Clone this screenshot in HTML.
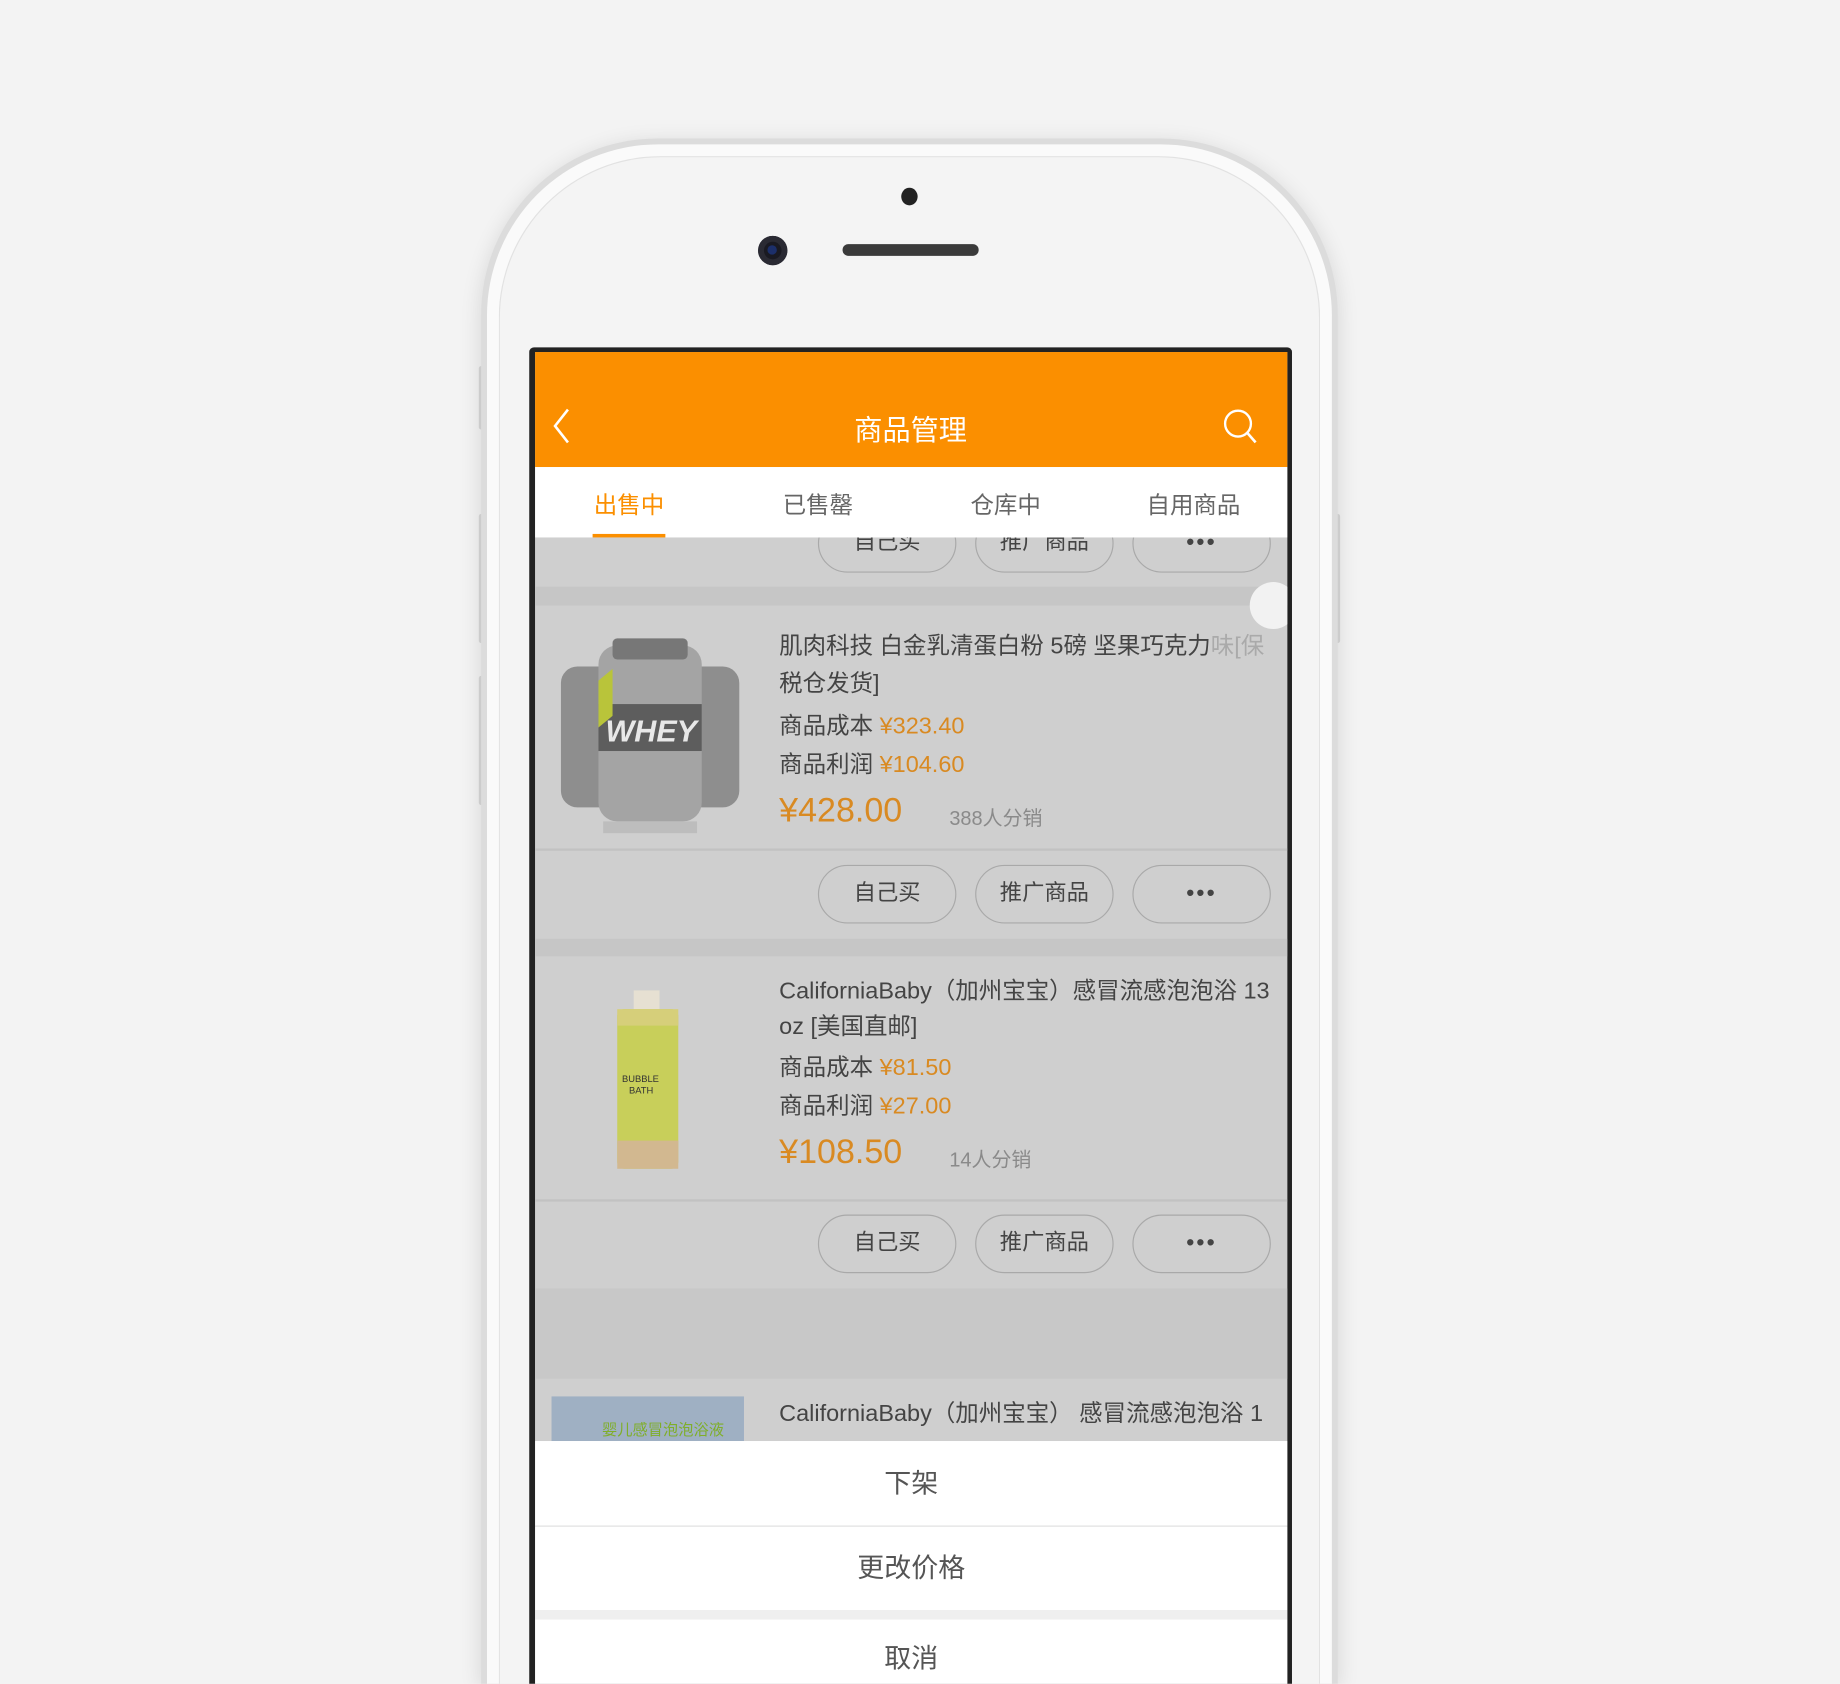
<!DOCTYPE html>
<html><head><meta charset="utf-8"><style>
*{margin:0;padding:0;box-sizing:border-box}
html,body{width:1840px;height:1684px;overflow:hidden;background:#f3f3f3}
#w{position:absolute;left:0;top:0;width:1568px;height:1435px;overflow:hidden;transform:scale(1.17347);transform-origin:0 0;font-family:"Liberation Sans","Noto Sans CJK SC",sans-serif}
.a{position:absolute}
.btn{position:absolute;width:118px;height:50px;border:1.5px solid #a9a9a9;border-radius:25px;text-align:center;line-height:47px;font-size:19px;color:#444}
.t{position:absolute;left:664px;font-size:20px;color:#444;white-space:nowrap}
.o{color:#d98a22}
.pr{position:absolute;left:664px;font-size:29px;color:#d98a22}
.sold{position:absolute;left:809px;font-size:17px;color:#8a8a8a}
.as{position:absolute;left:456px;width:641px;text-align:center;font-size:23px;color:#555;background:#fff}
</style></head><body><div id="w">
<div class="a" style="left:408px;top:312px;width:6px;height:54px;background:#d8d8d8;border-radius:2px"></div>
<div class="a" style="left:408px;top:438px;width:6px;height:110px;background:#d8d8d8;border-radius:2px"></div>
<div class="a" style="left:408px;top:576px;width:6px;height:110px;background:#d8d8d8;border-radius:2px"></div>
<div class="a" style="left:1136px;top:438px;width:6px;height:110px;background:#d8d8d8;border-radius:2px"></div>
<div class="a" style="left:410px;top:118px;width:730px;height:1317px;border-radius:150px 150px 0 0;background:#dcdcdc;box-shadow:0 4px 18px rgba(0,0,0,.12)"></div>
<div class="a" style="left:415px;top:123px;width:720px;height:1312px;border-radius:146px 146px 0 0;background:#fafafa"></div>
<div class="a" style="left:425px;top:133px;width:700px;height:1302px;border-radius:138px 138px 0 0;background:#f4f4f4;border:1px solid #e2e2e2;border-bottom:none"></div>
<div class="a" style="left:768px;top:160px;width:14px;height:15px;border-radius:50%;background:#222"></div>
<div class="a" style="left:646px;top:201px;width:25px;height:25px;border-radius:50%;background:#1a1a22;box-shadow:inset 0 0 0 5px #2a2a33"></div>
<div class="a" style="left:654px;top:209px;width:8px;height:8px;border-radius:50%;background:#1c2f6a"></div>
<div class="a" style="left:718px;top:208px;width:116px;height:10px;border-radius:5px;background:#3a3a3a"></div>
<div class="a" style="left:451px;top:296px;width:650px;height:1139px;background:#222;border-radius:4px 4px 0 0"></div>
<div class="a" style="left:456px;top:300px;width:641px;height:1135px;background:#cfcfcf"></div>
<div class="a" style="left:456px;top:300px;width:641px;height:98px;background:#fb8f00"></div>
<svg class="a" style="left:466px;top:345px" width="26" height="36"><path d="M18 4 L7 18 L18 32" stroke="#fff" stroke-width="2.2" fill="none"/></svg>
<div class="a" style="left:676px;top:347px;width:200px;text-align:center;color:#fff;font-size:24px">商品管理</div>
<svg class="a" style="left:1040px;top:346px" width="34" height="34"><circle cx="15" cy="15" r="11" stroke="#fff" stroke-width="2" fill="none"/><path d="M23 23 L30 31" stroke="#fff" stroke-width="2.2"/></svg>
<div class="a" style="left:456px;top:398px;width:641px;height:60px;background:#fff"></div>
<div class="a" style="left:476px;top:414px;width:120px;text-align:center;font-size:20px;color:#fb8f00">出售中</div>
<div class="a" style="left:505px;top:455px;width:62px;height:3px;background:#fb8f00"></div>
<div class="a" style="left:637px;top:414px;width:120px;text-align:center;font-size:20px;color:#666">已售罄</div>
<div class="a" style="left:797px;top:414px;width:120px;text-align:center;font-size:20px;color:#666">仓库中</div>
<div class="a" style="left:957px;top:414px;width:120px;text-align:center;font-size:20px;color:#666">自用商品</div>
<div class="a" style="left:456px;top:458px;width:641px;height:770px;overflow:hidden">
<div class="a" style="left:0;top:0;width:641px;height:770px;background:#cfcfcf"></div>
<div class="btn" style="left:241px;top:-20px">自己买</div>
<div class="btn" style="left:375px;top:-20px">推广商品</div>
<div class="btn" style="left:509px;top:-20px;font-weight:bold;letter-spacing:2px">•••</div>
<div class="a" style="left:0;top:42px;width:641px;height:16px;background:#c6c6c6"></div>
<div class="a" style="left:609px;top:38px;width:40px;height:40px;border-radius:50%;background:#f2f2f2"></div>
<div class="a" style="left:0;top:265px;width:641px;height:2px;background:#c2c2c2"></div>
<div class="a" style="left:0;top:342px;width:641px;height:15px;background:#c6c6c6"></div>
<div class="a" style="left:0;top:564px;width:641px;height:2px;background:#c2c2c2"></div>
<div class="a" style="left:0;top:640px;width:641px;height:77px;background:#c8c8c8"></div>
</div>
<svg class="a" style="left:474px;top:540px" width="160" height="172">
 <rect x="4" y="28" width="56" height="120" rx="14" fill="#8e8e8e"/><rect x="100" y="28" width="56" height="120" rx="14" fill="#8e8e8e"/>
 <rect x="36" y="10" width="88" height="150" rx="16" fill="#a4a4a4"/>
 <rect x="48" y="4" width="64" height="18" rx="4" fill="#777"/>
 <rect x="36" y="60" width="88" height="40" fill="#5d5d5d"/>
 <text x="42" y="92" font-size="26" font-style="italic" font-weight="bold" fill="#e8e8e8" font-family="Liberation Sans">WHEY</text>
 <path d="M36 40 L48 30 L48 70 L36 80Z" fill="#b9c43a"/>
 <rect x="40" y="160" width="80" height="10" fill="#bdbdbd"/>
</svg>
<div class="t" style="top:534px">肌肉科技 白金乳清蛋白粉 5磅 坚果巧克力<span style="color:#aaa">味[保</span></div>
<div class="t" style="top:566px">税仓发货]</div>
<div class="t" style="top:602px">商品成本 <span class="o">¥323.40</span></div>
<div class="t" style="top:635px">商品利润 <span class="o">¥104.60</span></div>
<div class="pr" style="top:675px">¥428.00</div>
<div class="sold" style="top:683px">388人分销</div>
<div class="btn" style="left:697px;top:737px">自己买</div>
<div class="btn" style="left:831px;top:737px">推广商品</div>
<div class="btn" style="left:965px;top:737px;font-weight:bold;letter-spacing:2px">•••</div>
<svg class="a" style="left:520px;top:842px" width="64" height="158">
 <rect x="20" y="2" width="22" height="18" fill="#e6e0d2"/>
 <rect x="6" y="18" width="52" height="136" rx="6" fill="#c8cf5a"/>
 <rect x="6" y="18" width="52" height="14" fill="#d6cf7a"/>
 <text x="10" y="80" font-size="8" fill="#333" font-family="Liberation Sans">BUBBLE</text>
 <text x="16" y="90" font-size="8" fill="#333" font-family="Liberation Sans">BATH</text>
 <rect x="6" y="130" width="52" height="24" fill="#d2b890"/>
</svg>
<div class="t" style="top:828px">CaliforniaBaby（加州宝宝）感冒流感泡泡浴 13</div>
<div class="t" style="top:858px">oz [美国直邮]</div>
<div class="t" style="top:893px">商品成本 <span class="o">¥81.50</span></div>
<div class="t" style="top:926px">商品利润 <span class="o">¥27.00</span></div>
<div class="pr" style="top:966px">¥108.50</div>
<div class="sold" style="top:974px">14人分销</div>
<div class="btn" style="left:697px;top:1035px">自己买</div>
<div class="btn" style="left:831px;top:1035px">推广商品</div>
<div class="btn" style="left:965px;top:1035px;font-weight:bold;letter-spacing:2px">•••</div>
<div class="a" style="left:470px;top:1190px;width:164px;height:38px;background:#9fb0c3"></div>
<div class="a" style="left:513px;top:1208px;font-size:13px;color:#7fae2a">婴儿感冒泡泡浴液</div>
<div class="t" style="top:1188px">CaliforniaBaby（加州宝宝） 感冒流感泡泡浴 1</div>
<div class="as" style="top:1228px;height:72px;line-height:72px">下架</div>
<div class="a" style="left:456px;top:1300px;width:641px;height:1px;background:#e2e2e2"></div>
<div class="as" style="top:1301px;height:71px;line-height:71px">更改价格</div>
<div class="a" style="left:456px;top:1372px;width:641px;height:8px;background:#efefef"></div>
<div class="as" style="top:1380px;height:55px;line-height:66px">取消</div>
</div></body></html>
